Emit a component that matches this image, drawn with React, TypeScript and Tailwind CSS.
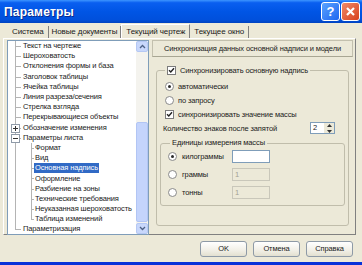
import React from 'react';

type Row = { t: string; l: 0 | 1; exp?: '+' | '-'; sel?: boolean; last?: boolean };

const rows: Row[] = [
  { t: 'Текст на чертеже', l: 0 },
  { t: 'Шероховатость', l: 0 },
  { t: 'Отклонения формы и база', l: 0 },
  { t: 'Заголовок таблицы', l: 0 },
  { t: 'Ячейка таблицы', l: 0 },
  { t: 'Линия разреза/сечения', l: 0 },
  { t: 'Стрелка взгляда', l: 0 },
  { t: 'Перекрывающиеся объекты', l: 0 },
  { t: 'Обозначение изменения', l: 0, exp: '+' },
  { t: 'Параметры листа', l: 0, exp: '-' },
  { t: 'Формат', l: 1 },
  { t: 'Вид', l: 1 },
  { t: 'Основная надпись', l: 1, sel: true },
  { t: 'Оформление', l: 1 },
  { t: 'Разбиение на зоны', l: 1 },
  { t: 'Технические требования', l: 1 },
  { t: 'Неуказанная шероховатость', l: 1 },
  { t: 'Таблица изменений', l: 1, last: true },
  { t: 'Параметризация', l: 0, last: true },
];

const Check = () => (
  <span className="w-[9px] h-[9px] border border-[#7b7b7b] bg-white flex items-center justify-center shrink-0">
    <svg width="7" height="7" viewBox="0 0 7 7">
      <path d="M1 3.2 L2.8 5 L6 1.2" stroke="#222" strokeWidth="1.4" fill="none" />
    </svg>
  </span>
);

const Radio = ({ on }: { on?: boolean }) => (
  <span className="w-[9px] h-[9px] rounded-full border border-[#8a8a8a] bg-white flex items-center justify-center shrink-0">
    {on && <span className="w-[3px] h-[3px] rounded-full bg-[#2a2a2a]" />}
  </span>
);

const Chevron = ({ up }: { up?: boolean }) => (
  <svg width="7" height="5" viewBox="0 0 7 5">
    <path d={up ? 'M1 4 L3.5 1.5 L6 4' : 'M1 1 L3.5 3.5 L6 1'} stroke="#4d6185" strokeWidth="1.3" fill="none" />
  </svg>
);

function TreeRow({ r }: { r: Row }) {
  return (
    <div className="relative h-[10.2px] flex items-center">
      {/* tree connector lines */}
      {r.last && r.l === 0 ? (
        <span className="absolute left-[5px] w-px bg-[#b4b4b4] top-0 h-[5px]" />
      ) : (
        <span className="absolute left-[5px] w-px bg-[#b4b4b4] top-0 bottom-0" />
      )}
      {r.l === 0 && <span className="absolute left-[5px] top-[5px] w-[6px] h-px bg-[#b4b4b4]" />}
      {r.l === 1 && (
        <>
          <span className={`absolute left-[21px] w-px bg-[#b4b4b4] top-0 ${r.last ? 'h-[5px]' : 'bottom-0'}`} />
          <span className="absolute left-[21px] top-[5px] w-[3px] h-px bg-[#b4b4b4]" />
        </>
      )}
      {r.exp && (
        <span className="absolute left-[1px] top-[1px] w-[9px] h-[9px] border border-[#8f9aa8] bg-white flex items-center justify-center">
          <span className="absolute w-[5px] h-px bg-[#333]" />
          {r.exp === '+' && <span className="absolute w-px h-[5px] bg-[#333]" />}
        </span>
      )}
      <span
        className={`${r.l === 0 ? 'ml-[12px]' : 'ml-[24px]'} px-[1px] leading-[10px] whitespace-nowrap ${
          r.sel ? 'bg-[#316ac5] text-white' : 'text-[#1a1a1a]'
        }`}
      >
        {r.t}
      </span>
    </div>
  );
}

export default function App() {
  return (
    <div className="w-[362px] h-[265px] bg-[#ece9d8] flex flex-col overflow-hidden font-['Liberation_Sans',Arial,sans-serif] text-[7.5px] tracking-[-0.12px] text-[#1a1a1a]">
      {/* title bar */}
      <div className="h-[23px] shrink-0 flex items-center justify-between pl-[4px] pr-[2px] bg-[linear-gradient(#3d95ff_0%,#0a5ff0_12%,#0055e5_50%,#0050dc_85%,#0043c0_100%)]">
        <span className="text-white font-bold text-[12px] tracking-[0.2px] [text-shadow:1px_1px_0_#0a2a8c]">Параметры</span>
        <div className="flex gap-[1px]">
          <div className="w-[19px] h-[19px] rounded-[3px] border border-white bg-[linear-gradient(135deg,#5aa3ff,#1e66f0)] flex items-center justify-center text-white font-bold text-[13px] tracking-normal">
            ?
          </div>
          <div className="w-[19px] h-[19px] rounded-[3px] border border-white bg-[linear-gradient(135deg,#f08a6a,#d8401c)] flex items-center justify-center">
            <svg width="11" height="11" viewBox="0 0 11 11">
              <path d="M2 2 L9 9 M9 2 L2 9" stroke="white" strokeWidth="2.2" />
            </svg>
          </div>
        </div>
      </div>

      {/* tabs */}
      <div className="h-[15px] shrink-0 flex items-end pl-[8px] pt-[2px] text-[8px] tracking-[-0.1px]">
        <div className="h-[12px] px-[4px] flex items-center border-r border-[#808080]">Система</div>
        <div className="h-[12px] px-[3px] flex items-center border-r border-[#808080]">Новые документы</div>
        <div className="h-[14px] px-[4px] flex items-center border-t border-l border-white border-r border-r-[#808080] bg-[#ece9d8]">
          Текущий чертеж
        </div>
        <div className="h-[12px] px-[4px] flex items-center border-r border-[#808080]">Текущее окно</div>
      </div>

      {/* tab page */}
      <div className="h-[197px] shrink-0 mx-[3px] mr-[6px] border-t border-l border-white border-r border-b border-r-[#808080] border-b-[#808080] flex gap-[3px] p-[1px] pl-[3px]">
        {/* tree */}
        <div className="w-[142px] h-[195px] border border-[#7f9db9] bg-white flex">
          <div className="flex-1 pl-[2px] overflow-hidden">
            {rows.map((r, i) => (
              <TreeRow key={i} r={r} />
            ))}
          </div>
          <div className="w-[12px] bg-[#f4f3ee] flex flex-col">
            <div className="h-[11px] rounded-[2px] bg-[#c8d7fb] border border-[#b5c8f4] flex items-center justify-center">
              <Chevron up />
            </div>
            <div className="flex-1 flex flex-col">
              <div className="h-[70px]" />
              <div className="h-[100px] rounded-[2px] bg-[#c4d4fc] border border-[#b2c5f4]" />
            </div>
            <div className="h-[11px] rounded-[2px] bg-[#c8d7fb] border border-[#b5c8f4] flex items-center justify-center">
              <Chevron />
            </div>
          </div>
        </div>

        {/* right side */}
        <div className="flex-1 flex flex-col pr-[1px]">
          <div className="h-[17px] border border-[#c3c0ae] border-b-[#a8a693] flex items-center justify-center">
            Синхронизация данных основной надписи и модели
          </div>
          <fieldset className="mt-[8px] mx-[4px] h-[161px] border border-[#c0bdab] rounded-[3px] px-[6px] pb-[5px]">
            <legend className="ml-[2px] px-[2px] flex items-center gap-[4px]">
              <Check />
              <span>Синхронизировать основную надпись</span>
            </legend>
            <div className="pl-[1px] pt-[3px] flex flex-col">
              <div className="h-[14px] flex items-center gap-[4px] pl-[1px]">
                <Radio on />
                <span>автоматически</span>
              </div>
              <div className="h-[14px] flex items-center gap-[4px] pl-[1px]">
                <Radio />
                <span>по запросу</span>
              </div>
              <div className="h-[14px] flex items-center gap-[4px] pl-[1px]">
                <Check />
                <span>синхронизировать значение массы</span>
              </div>
              <div className="h-[14px] flex items-center justify-between">
                <span className="-ml-[1px]">Количество знаков после запятой</span>
                <div className="w-[25px] h-[12px] border border-[#7f9db9] bg-white flex mr-[7px]">
                  <span className="flex-1 pl-[2px] leading-[10px]">2</span>
                  <div className="w-[10px] flex flex-col gap-[1px] bg-[#ece9d8]">
                    <div className="flex-1 flex items-center justify-center">
                      <svg width="5" height="3" viewBox="0 0 5 3"><path d="M0 3 L2.5 0 L5 3Z" fill="#333" /></svg>
                    </div>
                    <div className="flex-1 flex items-center justify-center">
                      <svg width="5" height="3" viewBox="0 0 5 3"><path d="M0 0 L2.5 3 L5 0Z" fill="#333" /></svg>
                    </div>
                  </div>
                </div>
              </div>
            </div>
            <fieldset className="mt-[3px] -mx-[3px] border border-[#c0bdab] rounded-[3px] pl-[7px] pb-[6px] h-[68px]">
              <legend className="ml-[2px] px-[2px] leading-[10px]">Единицы измерения массы</legend>
              <div className="flex flex-col gap-[5px] pt-[2px]">
                {[
                  { t: 'килограммы', on: true },
                  { t: 'граммы' },
                  { t: 'тонны' },
                ].map((o) => (
                  <div key={o.t} className="h-[13px] flex items-center">
                    <div className="w-[64px] flex items-center gap-[5px]">
                      <Radio on={o.on} />
                      <span>{o.t}</span>
                    </div>
                    <div
                      className={`w-[38px] h-[13px] border flex items-center pl-[2px] ${
                        o.on ? 'bg-white border-[#7f9db9]' : 'bg-[#ece9d8] border-[#c9c7ba] text-[#a3a193]'
                      }`}
                    >
                      {o.on ? '' : '1'}
                    </div>
                  </div>
                ))}
              </div>
            </fieldset>
          </fieldset>
        </div>
      </div>

      {/* buttons */}
      <div className="flex-1 flex items-center justify-end gap-[6px] pr-[9px] pt-[1px]">
        {['OK', 'Отмена', 'Справка'].map((b) => (
          <div
            key={b}
            className="w-[47px] h-[16px] rounded-[3px] border border-[#8e9aa6] bg-[linear-gradient(#ffffff,#f1efe6_60%,#e3e0d0)] flex items-center justify-center"
          >
            {b}
          </div>
        ))}
      </div>
      <div className="h-[3px] shrink-0 bg-[#0831d9]" />
    </div>
  );
}
